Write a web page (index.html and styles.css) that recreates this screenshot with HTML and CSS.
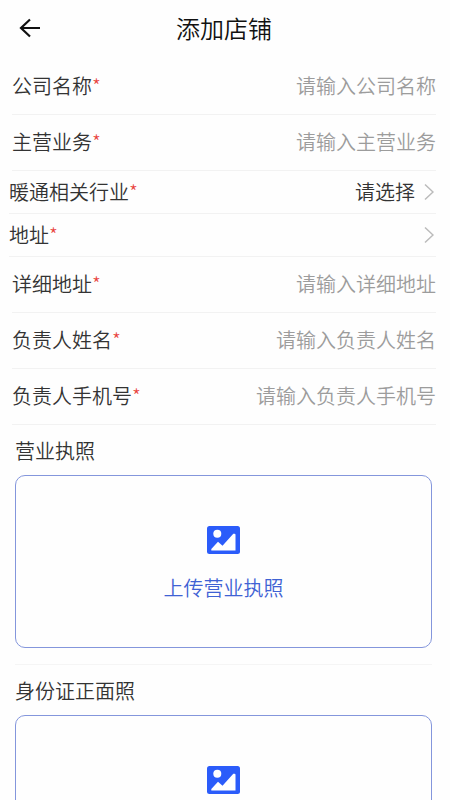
FILE: index.html
```html
<!DOCTYPE html>
<html lang="zh-CN">
<head>
<meta charset="utf-8">
<meta name="viewport" content="width=device-width, initial-scale=1">
<title>添加店铺</title>
<link rel="stylesheet" href="styles.css">
</head>
<body>
<div class="page">
  <header class="header">
    <button class="back" type="button" aria-label="返回">
      <svg width="22" height="20" viewBox="0 0 22 20" fill="none" stroke="currentColor" stroke-width="2.2"><path d="M11 1.500 2 10l9 8.500M2 10h19"/></svg>
    </button>
    <h1 class="title">添加店铺</h1>
  </header>
  <form class="form">
    <div class="row">
      <label class="label" for="company">公司名称<span class="star">*</span></label>
      <input class="input" id="company" type="text" placeholder="请输入公司名称">
    </div>
    <div class="row">
      <label class="label" for="business">主营业务<span class="star">*</span></label>
      <input class="input" id="business" type="text" placeholder="请输入主营业务">
    </div>
    <div class="row row-pick">
      <label class="label" for="industry">暖通相关行业<span class="star">*</span></label>
      <select class="select" id="industry"><option>请选择</option></select>
      <svg class="chevron" width="10" height="18" viewBox="0 0 10 18" fill="none" stroke="currentColor" stroke-width="1.500"><path d="M1 1.500 9 9l-8 7.500"/></svg>
    </div>
    <div class="row row-pick">
      <label class="label" for="region">地址<span class="star">*</span></label>
      <select class="select" id="region"><option></option></select>
      <svg class="chevron" width="10" height="18" viewBox="0 0 10 18" fill="none" stroke="currentColor" stroke-width="1.500"><path d="M1 1.500 9 9l-8 7.500"/></svg>
    </div>
    <div class="row">
      <label class="label" for="address">详细地址<span class="star">*</span></label>
      <input class="input" id="address" type="text" placeholder="请输入详细地址">
    </div>
    <div class="row">
      <label class="label" for="person">负责人姓名<span class="star">*</span></label>
      <input class="input" id="person" type="text" placeholder="请输入负责人姓名">
    </div>
    <div class="row">
      <label class="label" for="phone">负责人手机号<span class="star">*</span></label>
      <input class="input" id="phone" type="tel" placeholder="请输入负责人手机号">
    </div>
    <section class="section">
      <h2 class="caption">营业执照</h2>
      <button class="upload" type="button">
        <svg width="33" height="28" viewBox="0 0 33 28"><rect width="33" height="28" rx="2.500" fill="#2b5cfa"/><circle cx="10.300" cy="7.800" r="4" fill="#fff"/><path d="M4.300 24.500V23L11 15.800l4.500 4L26.300 7.800h1.200q1 0 1 1v15.700z" fill="#fff"/></svg>
        <span>上传营业执照</span>
      </button>
    </section>
    <section class="section">
      <h2 class="caption">身份证正面照</h2>
      <button class="upload" type="button">
        <svg width="33" height="28" viewBox="0 0 33 28"><rect width="33" height="28" rx="2.500" fill="#2b5cfa"/><circle cx="10.300" cy="7.800" r="4" fill="#fff"/><path d="M4.300 24.500V23L11 15.800l4.500 4L26.300 7.800h1.200q1 0 1 1v15.700z" fill="#fff"/></svg>
        <span>上传身份证正面照</span>
      </button>
    </section>
  </form>
</div>
</body>
</html>
```
FILE: styles.css
```css
* {
  box-sizing: border-box;
}

body,
button,
input,
select {
  margin: 0;
  font-family: "Noto Sans CJK SC", sans-serif;
  font-size: 20px;
  font-weight: 350;
  line-height: 28px;
  color: #333;
}

body {
  background: #fefefe;
}

button,
input,
select {
  padding: 0;
  border: 0;
  background: none;
  appearance: none;
}

.header {
  display: grid;
  grid-template-columns: 60px 1fr 62px;
  align-items: center;
  height: 55px;
}

.back {
  display: flex;
  padding-left: 19px;
  color: #111;
}

.title {
  margin: 0;
  font-size: 24px;
  font-weight: 350;
  line-height: 36px;
  text-align: center;
  color: #111;
}

.form {
  padding: 4px 14px 24px 12px;
}

.row {
  display: flex;
  align-items: center;
  height: 56px;
  padding-bottom: 1px;
  border-bottom: 1px solid #f2f2f2;
}

.row-pick {
  height: 43px;
  padding-bottom: 0;
  margin-left: -3px;
}

.label {
  flex: none;
}

.star {
  font-weight: 300;
  color: #e8403a;
}

.input,
.select {
  flex: 1;
  min-width: 0;
  text-align: right;
  text-align-last: right;
}

.input::placeholder {
  color: #9c9c9c;
  opacity: 1;
}

.chevron {
  flex: none;
  margin: 0 2px 0 9px;
  color: #bbb;
}

.section {
  margin: 0 4px 0 3px;
  padding: 12px 0 16px;
  border-bottom: 1px solid #f5f5f5;
}

.caption {
  margin: 0 0 10px;
  font-size: 20px;
  font-weight: 350;
  line-height: 28px;
}

.upload {
  display: flex;
  flex-direction: column;
  align-items: center;
  justify-content: center;
  gap: 20px;
  width: 100%;
  height: 173px;
  padding-top: 4px;
  border: 1px solid #8496dc;
  border-radius: 10px;
  color: #3f62d4;
}
```
